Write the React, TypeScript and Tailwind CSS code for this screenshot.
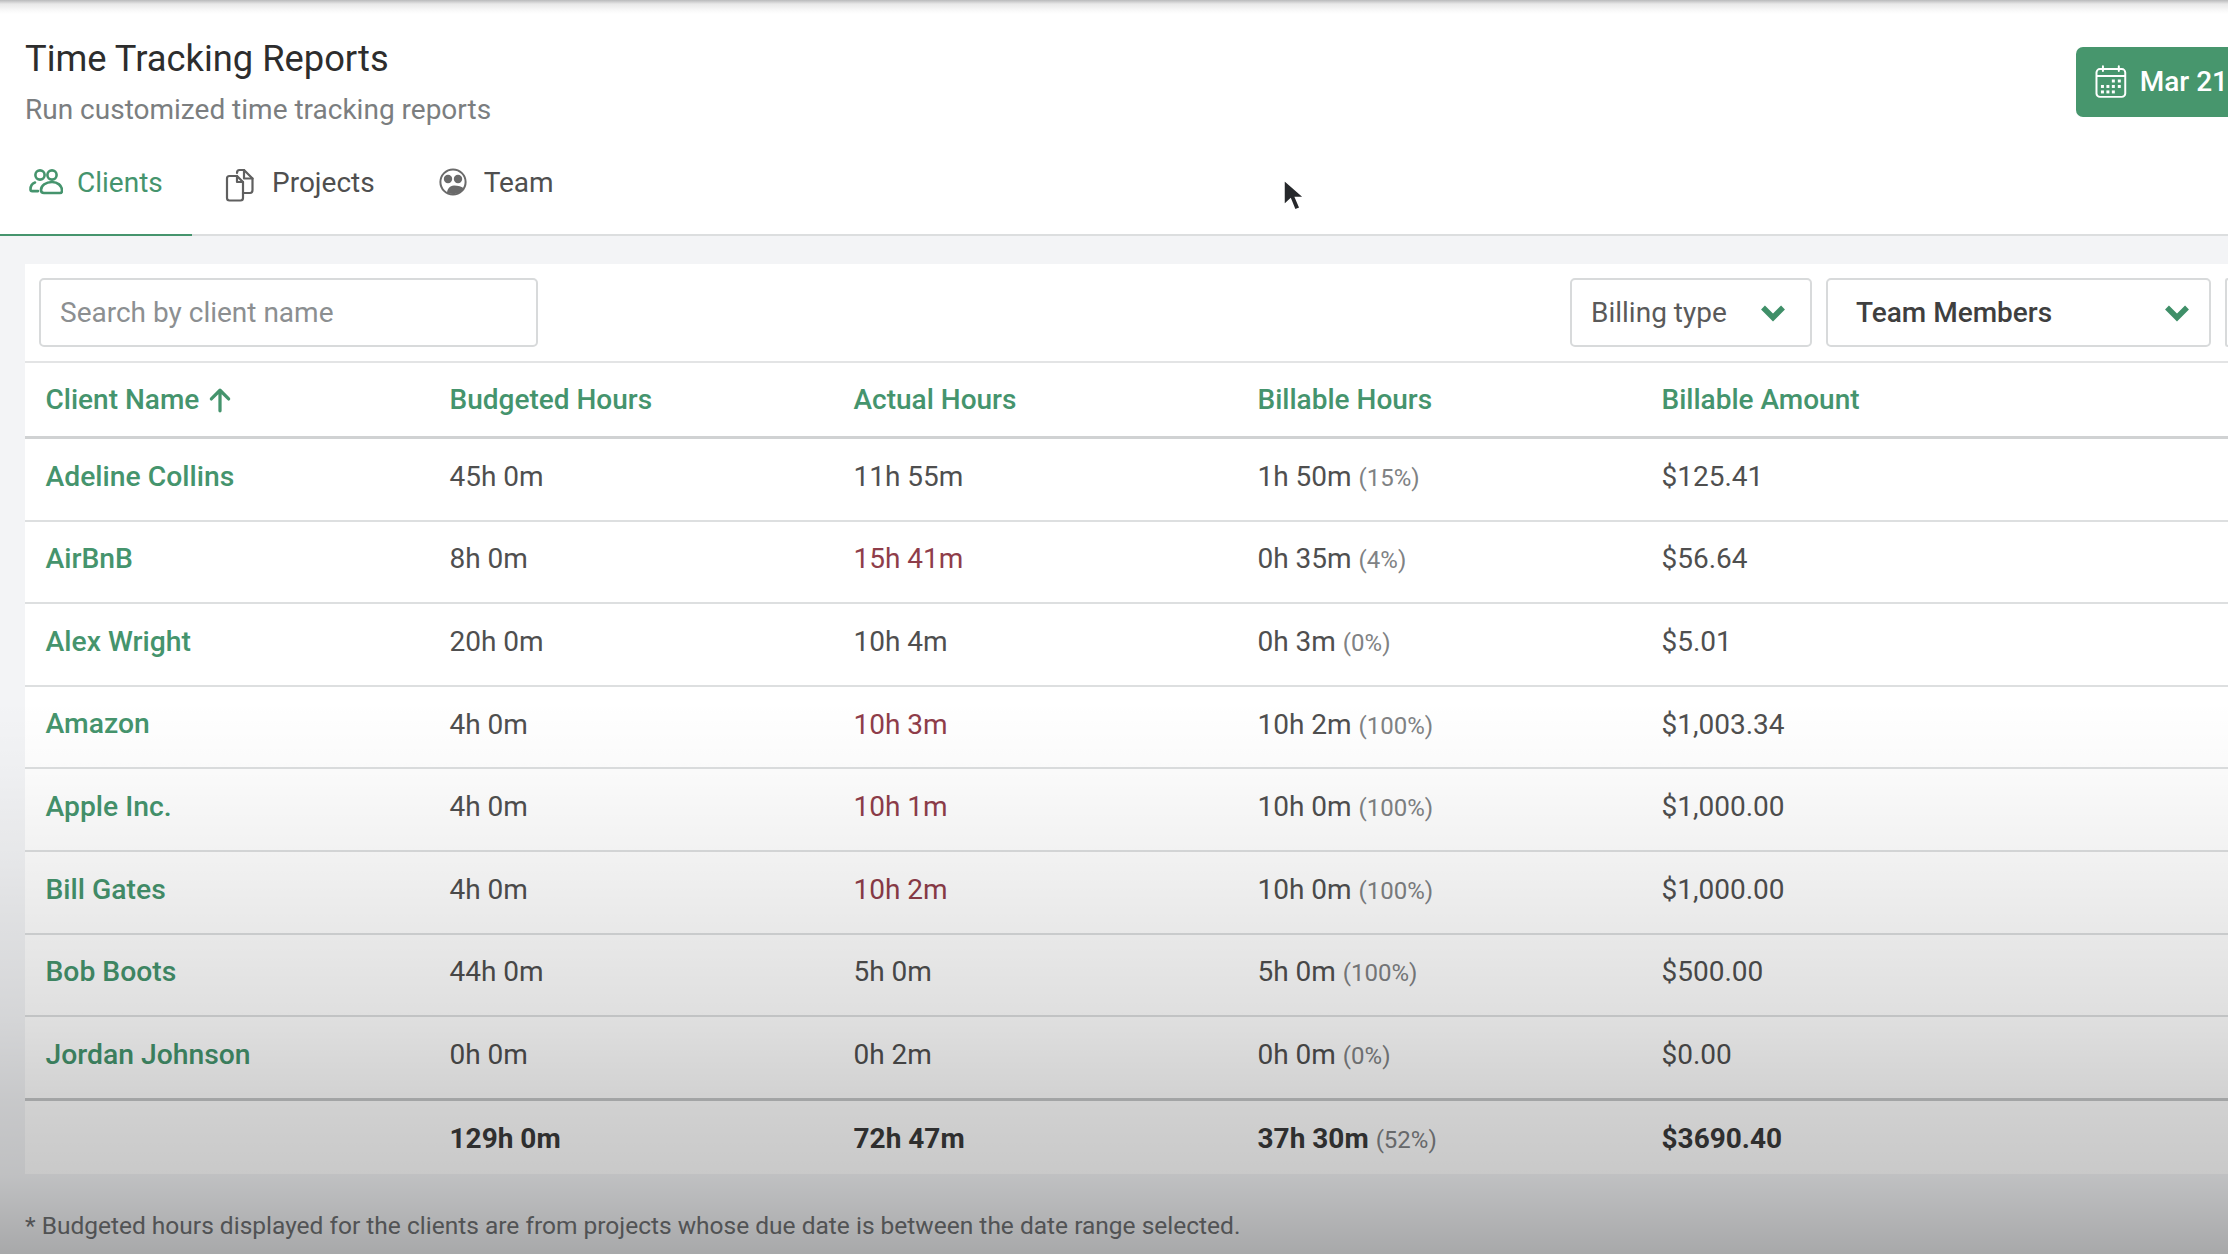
import React from "react";

const rows = [
  ["Adeline Collins", "45h 0m", "11h 55m", false, "1h 50m", "(15%)", "$125.41"],
  ["AirBnB", "8h 0m", "15h 41m", true, "0h 35m", "(4%)", "$56.64"],
  ["Alex Wright", "20h 0m", "10h 4m", false, "0h 3m", "(0%)", "$5.01"],
  ["Amazon", "4h 0m", "10h 3m", true, "10h 2m", "(100%)", "$1,003.34"],
  ["Apple Inc.", "4h 0m", "10h 1m", true, "10h 0m", "(100%)", "$1,000.00"],
  ["Bill Gates", "4h 0m", "10h 2m", true, "10h 0m", "(100%)", "$1,000.00"],
  ["Bob Boots", "44h 0m", "5h 0m", false, "5h 0m", "(100%)", "$500.00"],
  ["Jordan Johnson", "0h 0m", "0h 2m", false, "0h 0m", "(0%)", "$0.00"],
] as const;

const ClientsIcon = () => (
  <svg width="34" height="28" viewBox="0 0 34 28" fill="none" stroke="#45946d" strokeWidth="2.6" strokeLinecap="round" strokeLinejoin="round">
    <circle cx="11" cy="7" r="4.6" />
    <circle cx="23" cy="7" r="4.6" />
    <path d="M6 14.5C3 15.5 1.5 18 1.5 21.5c0 1 .7 1.6 1.8 1.6H9" />
    <path d="M23 14c-6 0-11 3.5-11 8 0 2 1 3 3 3h16c1.5 0 2-1 2-2.5 0-5-4.500-8.500-10-8.500z" />
  </svg>
);
const ProjectsIcon = () => (
  <svg width="30" height="34" viewBox="0 0 30 34" fill="none" stroke="#5f5f5f" strokeWidth="2.2" strokeLinejoin="round" strokeLinecap="round">
    <path d="M12 8H4.500C2.800 8 2 9 2 10.500V30c0 1.500 1 2.500 2.500 2.500h11c1.500 0 2.500-1 2.500-2.500v-5" />
    <path d="M12 8l6 6v11" />
    <path d="M12 5c0-1.500 1-3 2.500-3H19l8.500 8.500V22c0 1.800-1 3-2.500 3h-7" />
    <path d="M19 2v8.500h8.500" />
    <path d="M12 8v6h6" />
  </svg>
);
const TeamIcon = () => (
  <svg width="28" height="28" viewBox="0 0 28 28">
    <circle cx="14" cy="14" r="12.6" fill="#fff" stroke="#6a6a6a" strokeWidth="2" />
    <circle cx="9" cy="11" r="4.2" fill="#6a6a6a" />
    <circle cx="19" cy="11" r="4.2" fill="#6a6a6a" />
    <path d="M8 25.5c0-4 2.5-8 7-8 4 0 8 1 10 3-2 3-6 5.5-11 5.5-2 0-4-.5-6-.5z" fill="#6a6a6a" />
  </svg>
);
const CalendarIcon = () => (
  <svg width="32" height="34" viewBox="0 0 32 34" fill="none" stroke="#fff" strokeWidth="2">
    <rect x="1.5" y="4" width="29" height="28" rx="3.5" />
    <path d="M1.500 11h29" />
    <path d="M8 1v5M24 1v5" strokeLinecap="round" />
    <g fill="#fff" stroke="none">
      <rect x="17" y="14.5" width="3" height="3" />
      <rect x="23" y="14.5" width="3" height="3" />
      <rect x="6" y="20" width="3" height="3" />
      <rect x="11.5" y="20" width="3" height="3" />
      <rect x="17" y="20" width="3" height="3" />
      <rect x="23" y="20" width="3" height="3" />
      <rect x="6" y="25.5" width="3" height="3" />
      <rect x="11.5" y="25.5" width="3" height="3" />
      <rect x="17" y="25.5" width="3" height="3" />
    </g>
  </svg>
);
const Chevron = () => (
  <svg width="26" height="18" viewBox="0 0 26 18" fill="none" stroke="#3f8f68" strokeWidth="5.5" strokeLinejoin="miter">
    <path d="M3 3.5L13 13.5L23 3.5" />
  </svg>
);
const ArrowUp = () => (
  <svg width="26" height="26" viewBox="0 0 24 24" fill="none" stroke="#45946d" strokeWidth="3" strokeLinecap="round" strokeLinejoin="round">
    <path d="M12 22V3M4 11l8-8 8 8" />
  </svg>
);
const Cursor = () => (
  <svg width="24" height="34" viewBox="0 0 24 34">
    <path d="M2 2v25l6.500-6 4.500 11 5-2-4.500-10.500H22z" fill="#26282b" stroke="#fff" strokeWidth="1.5" />
  </svg>
);

const cols = "grid grid-cols-[404px_404px_404px_404px_1fr] items-center pl-[20.5px]";

export default function App() {
  return (
    <div className="relative h-[1254px] w-[2228px] overflow-hidden bg-[#f3f4f6] font-['Roboto',sans-serif] text-[28px] text-[#4f4f4f]">
      <div className="relative h-[236px] border-b-2 border-[#dcdedf] bg-white">
        <div className="h-[14px] bg-[linear-gradient(#b9babb_0,#e8e8e8_4px,#f8f8f8_10px,#ffffff_14px)]" />
        <div className="flex items-start justify-between pl-[25px] pt-[23px]">
          <div>
            <h1 className="text-[36.300px] leading-[44px] font-normal text-[#2d2d2d]">Time Tracking Reports</h1>
            <p className="mt-[11px] text-[28px] leading-[36px] text-[#7b7e80]">Run customized time tracking reports</p>
          </div>
          <button className="mt-[10px] flex h-[70px] w-[152px] items-center gap-[13px] overflow-hidden rounded-l-[7px] bg-[#47966d] pl-[19px] text-[28px] font-medium text-white">
            <CalendarIcon />
            <span className="whitespace-nowrap">Mar 21</span>
          </button>
        </div>
        <div className="absolute bottom-[-2px] left-0 flex h-[68px]">
          <div className="flex w-[192px] items-start gap-[14px] border-b-2 border-[#45946d] pl-[29px] font-normal text-[#45946d]">
            <ClientsIcon />
            <span className="leading-[30px]">Clients</span>
          </div>
          <div className="ml-[33px] flex items-start gap-[17px] text-[#4f4f4f]">
            <ProjectsIcon />
            <span className="leading-[30px]">Projects</span>
          </div>
          <div className="ml-[64px] flex items-start gap-[17px] text-[#4f4f4f]">
            <TeamIcon />
            <span className="leading-[30px]">Team</span>
          </div>
        </div>
      </div>

      <div className="ml-[25px] mt-[28px] bg-white">
        <div className="flex h-[99px] items-start justify-between border-b-2 border-[#e3e4e5] pl-[14px] pt-[14px]">
          <input
            readOnly
            placeholder="Search by client name"
            className="h-[69px] w-[499px] rounded-[5px] border-2 border-[#d8dadb] bg-white px-[19px] text-[28px] placeholder:text-[#8c8f91]"
          />
          <div className="flex gap-[14px]">
            <div className="flex h-[69px] w-[242px] items-center justify-between rounded-[5px] border-2 border-[#d8dadb] pl-[19px] pr-[24px] text-[#5a5a5a]">
              <span>Billing type</span>
              <Chevron />
            </div>
            <div className="flex h-[69px] w-[385px] items-center justify-between rounded-[5px] border-2 border-[#d8dadb] pl-[28px] pr-[19px] font-medium text-[#3f3f3f]">
              <span>Team Members</span>
              <Chevron />
            </div>
            <div className="h-[69px] w-[3px] rounded-l-[5px] border-2 border-r-0 border-[#d8dadb]" />
          </div>
        </div>
        <div className={`${cols} h-[76px] border-b-[3px] border-[#d0d2d3] font-medium text-[#45946d]`}>
          <div className="flex items-center gap-[8px]">
            <span>Client Name</span>
            <ArrowUp />
          </div>
          <div>Budgeted Hours</div>
          <div>Actual Hours</div>
          <div>Billable Hours</div>
          <div>Billable Amount</div>
        </div>
        {rows.map((r, i) => (
          <div key={r[0]} className={`${cols} pb-[5px] ${i === 7 ? "h-[84px] border-b-[3px] border-[#c6c8c9]" : "h-[82.6px] border-b-2 border-[#dddfe0]"}`}>
            <div className="text-[28.3px] font-medium text-[#45946d]">{r[0]}</div>
            <div>{r[1]}</div>
            <div className={r[3] ? "text-[#8f3d4a]" : ""}>{r[2]}</div>
            <div>
              {r[4]} <span className="text-[24px] text-[#808284]">{r[5]}</span>
            </div>
            <div>{r[6]}</div>
          </div>
        ))}
        <div className={`${cols} h-[73px] pt-[2px] font-bold text-[#3a3a3a]`}>
          <div />
          <div>129h 0m</div>
          <div>72h 47m</div>
          <div>
            37h 30m <span className="text-[24px] font-normal text-[#808284]">(52%)</span>
          </div>
          <div>$3690.40</div>
        </div>
      </div>

      <p className="mt-[38px] pl-[25px] text-[24.500px] leading-[28px] text-[#707274]">
        * Budgeted hours displayed for the clients are from projects whose due date is between the date range selected.
      </p>

      <div className="absolute left-[1282px] top-[178px]">
        <Cursor />
      </div>
      <div className="pointer-events-none absolute inset-0 bg-[linear-gradient(rgba(0,0,0,0)_0,rgba(0,0,0,0)_700px,rgba(0,0,0,0.02)_770px,rgba(0,0,0,0.05)_850px,rgba(0,0,0,0.09)_935px,rgba(0,0,0,0.125)_1017px,rgba(0,0,0,0.18)_1101px,rgba(0,0,0,0.21)_1175px,rgba(0,0,0,0.31)_1254px)]" />
    </div>
  );
}
